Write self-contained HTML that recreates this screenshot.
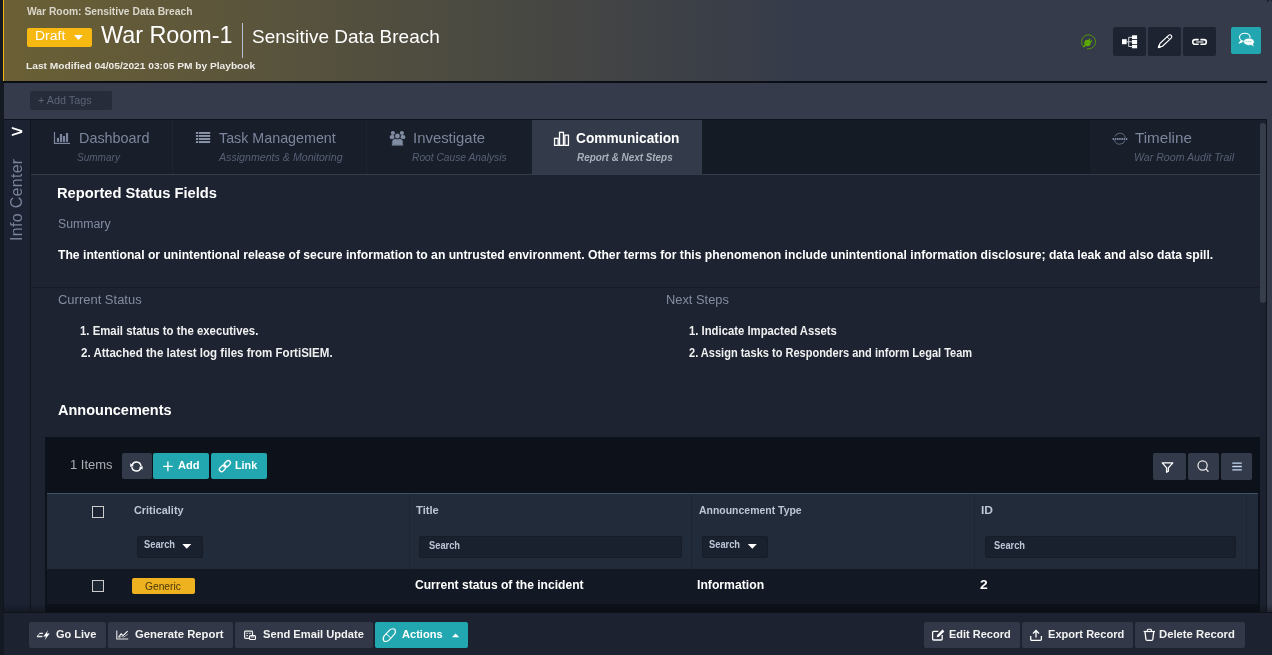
<!DOCTYPE html>
<html lang="en"><head><meta charset="utf-8"><title>War Room-1 | Sensitive Data Breach</title>
<style>
html,body{margin:0;padding:0;}
body{width:1272px;height:655px;overflow:hidden;background:#353b4a;font-family:"Liberation Sans", sans-serif;position:relative;}
#root{position:absolute;left:0;top:0;width:1272px;height:655px;overflow:hidden;will-change:transform;}
#root div{position:absolute;box-sizing:border-box;}
#root svg{position:absolute;overflow:visible;}
.t{position:absolute;white-space:nowrap;transform-origin:0 50%;display:inline-block;}
</style></head><body><div id="root">

<div style="left:0px;top:0px;width:1272px;height:81px;background:linear-gradient(to right,#6b6035 0px,#353b4a 800px);"></div>
<div style="left:0px;top:0px;width:4px;height:655px;background:#141922;"></div>
<div style="left:3px;top:0px;width:1px;height:81px;background:#f5b70f;"></div>
<div style="left:3px;top:81px;width:1264px;height:2px;background:#0b0f15;"></div>
<div style="left:27px;top:28px;width:65px;height:19px;background:#f7b911;border-radius:2px;"></div>
<div style="left:242px;top:23px;width:1px;height:35px;background:#b4bfd2;"></div>
<div style="left:1113px;top:27px;width:33px;height:29px;background:#1d2331;border-radius:2px;"></div>
<div style="left:1148px;top:27px;width:33px;height:29px;background:#1d2331;border-radius:2px;"></div>
<div style="left:1183px;top:27px;width:33px;height:29px;background:#1d2331;border-radius:2px;"></div>
<div style="left:1231px;top:27px;width:30px;height:27px;background:#22a7b1;border-radius:2px;"></div>
<div style="left:30px;top:91px;width:82px;height:19px;background:#262c3a;border-radius:2px;"></div>
<div style="left:3px;top:119px;width:1264px;height:493px;background:#10141c;"></div>
<div style="left:4px;top:120px;width:26px;height:492px;background:#1c2231;"></div>
<div style="left:31px;top:120px;width:1235px;height:492px;background:#1d2331;"></div>
<div style="left:31px;top:120px;width:1229px;height:54px;background:#181e2a;"></div>
<div style="left:702px;top:120px;width:388px;height:54px;background:#151b25;"></div>
<div style="left:531.5px;top:120px;width:170.5px;height:54px;background:#333a49;"></div>
<div style="left:172px;top:120px;width:1px;height:54px;background:#1e2532;"></div>
<div style="left:365.5px;top:120px;width:1.0px;height:54px;background:#1e2532;"></div>
<div style="left:31px;top:174px;width:1229px;height:1px;background:#343d4c;"></div>
<div style="left:1260px;top:120px;width:6px;height:492px;background:#1b212e;"></div>
<div style="left:1260px;top:123px;width:6px;height:180px;background:#363d4b;border-radius:3px;"></div>
<div style="left:31px;top:287px;width:1229px;height:1px;background:#171c27;"></div>
<div style="left:45px;top:437px;width:1214.5px;height:175px;background:#0d1119;"></div>
<div style="left:122px;top:453px;width:30px;height:26px;background:#333a49;border-radius:2px;"></div>
<div style="left:153px;top:453px;width:56px;height:26px;background:#22a7b1;border-radius:2px;"></div>
<div style="left:211px;top:453px;width:56px;height:26px;background:#22a7b1;border-radius:2px;"></div>
<div style="left:1153px;top:453px;width:33px;height:27px;background:#333a49;border-radius:2px;"></div>
<div style="left:1188px;top:453px;width:31px;height:27px;background:#333a49;border-radius:2px;"></div>
<div style="left:1221px;top:453px;width:31px;height:27px;background:#333a49;border-radius:2px;"></div>
<div style="left:47px;top:493px;width:1211px;height:76px;background:#212b39;border-top:1px solid #3e5169;"></div>
<div style="left:408.5px;top:494px;width:1.0px;height:75px;background:#1c2533;"></div>
<div style="left:691px;top:494px;width:1px;height:75px;background:#1c2533;"></div>
<div style="left:974px;top:494px;width:1px;height:75px;background:#1c2533;"></div>
<div style="left:1246px;top:494px;width:1px;height:75px;background:#1c2533;"></div>
<div style="left:47px;top:569px;width:1211px;height:35px;background:#131924;"></div>
<div style="left:92px;top:505.5px;width:12px;height:12.5px;background:#1d2532;border:1px solid #cdcdcd;"></div>
<div style="left:92px;top:580px;width:12px;height:12px;background:#1d2532;border:1px solid #cdcdcd;"></div>
<div style="left:137px;top:536px;width:66px;height:22px;background:#1a212e;border:1px solid #171c27;border-radius:2px;"></div>
<div style="left:419px;top:536px;width:263px;height:22px;background:#1a212e;border:1px solid #171c27;border-radius:2px;"></div>
<div style="left:702px;top:536px;width:66px;height:22px;background:#1a212e;border:1px solid #171c27;border-radius:2px;"></div>
<div style="left:985px;top:536px;width:251px;height:22px;background:#1a212e;border:1px solid #171c27;border-radius:2px;"></div>
<div style="left:132px;top:578px;width:63px;height:16px;background:#eeb11f;border-radius:2px;"></div>
<div style="left:3px;top:604px;width:1269px;height:8px;background:linear-gradient(to bottom,rgba(8,11,16,0),rgba(8,11,16,0.42));"></div>
<div style="left:3px;top:612px;width:1269px;height:1px;background:#0e1219;"></div>
<div style="left:3.7px;top:613px;width:1268.3px;height:42px;background:#1c2230;"></div>
<div style="left:29px;top:622px;width:77px;height:26px;background:#323847;border-radius:2px;"></div>
<div style="left:108px;top:622px;width:125px;height:26px;background:#323847;border-radius:2px;"></div>
<div style="left:235px;top:622px;width:138px;height:26px;background:#323847;border-radius:2px;"></div>
<div style="left:375px;top:622px;width:93px;height:26px;background:#22a7b1;border-radius:2px;"></div>
<div style="left:924px;top:622px;width:96px;height:26px;background:#323847;border-radius:2px;"></div>
<div style="left:1022px;top:622px;width:111px;height:26px;background:#323847;border-radius:2px;"></div>
<div style="left:1135px;top:622px;width:110px;height:26px;background:#323847;border-radius:2px;"></div>
<div style="left:1267px;top:0;width:2px;height:2px;background:#1a1f2a;border-radius:0 0 1px 1px"></div><div style="left:1271px;top:0;width:1px;height:1px;background:#1a1f2a"></div>
<span class="t" style="left:6.5px;top:240.5px;font-size:16px;line-height:20px;color:#78829a;letter-spacing:0.3px;transform-origin:0 0;transform:rotate(-90deg);">Info Center</span>
<svg style="left:0;top:0" width="1272" height="655" viewBox="0 0 1272 655" fill="none">
<!-- carets -->
<path d="M74 35h9l-4.5 5z" fill="#fff"/>
<path d="M182.3 543.9h9l-4.5 4.9z" fill="#fff"/>
<path d="M747.8 543.9h9l-4.5 4.9z" fill="#fff"/>
<path d="M452 637.2h7.2l-3.6-3.6z" fill="#fff"/>
<!-- green plug -->
<g stroke="#5aa800" fill="none" stroke-linecap="round">
<circle cx="1088.5" cy="41.9" r="7.05" stroke-width="0.85" stroke-dasharray="39.2 5.1" transform="rotate(138 1088.5 41.9)" opacity="0.9"/>
<path d="M1088.7 40.5l1.1-1.3M1090.3 42.1l1.3-1.1" stroke-width="1.3"/>
<path d="M1085.2 45.3l-1.3 1.3" stroke-width="1.5"/>
</g>
<circle cx="1087.5" cy="43" r="3.2" fill="#5aa800"/>
<!-- hierarchy -->
<g fill="#fff"><rect x="1122" y="39.2" width="4.7" height="5"/><rect x="1132" y="35.3" width="5.1" height="3.8"/><rect x="1132" y="40" width="5.1" height="4"/><rect x="1132" y="44.8" width="5.1" height="3.5"/></g>
<path d="M1126.7 41.8h2M1132 37.3h-3.3v9.2h3.3M1128.7 41.8h3.3" stroke="#d4d6da" stroke-width="1"/>
<!-- pencil -->
<g transform="translate(1158.3 47.6) rotate(-43.2)" stroke="#fff" stroke-width="1.15" stroke-linejoin="round">
<path d="M0.3 0L4-1.85H15.9a1.85 1.85 0 0 1 0 3.7H4z"/><path d="M13.8-1.85v3.7" stroke-width="0.9"/><path d="M0 0l2-0.95v1.9z" fill="#fff"/></g>
<!-- link -->
<g stroke="#fff" stroke-width="1.55" stroke-linecap="butt"><path d="M1198.7 39.6h-3.6a2.35 2.35 0 0 0 0 4.7h3.6"/><path d="M1200.4 39.6h3.6a2.35 2.35 0 0 1 0 4.7h-3.6"/></g>
<path d="M1196.2 41.95h7.2" stroke="#b9bbc0" stroke-width="1.5"/>
<!-- chat -->
<g stroke="#fff" stroke-width="1.1"><ellipse cx="1244.8" cy="37.3" rx="5.3" ry="4.1"/><path d="M1241.2 40.6l-2 2.5 3.6-1.5" stroke-linejoin="round" fill="#fff"/></g>
<ellipse cx="1248.9" cy="41.8" rx="5.4" ry="3.6" fill="#fff" stroke="#22a7b1" stroke-width="0.6"/><path d="M1250.8 44.4l2.8 2-0.8-3.2z" fill="#fff"/>
<path d="M1245.6 41.5h6.6" stroke="#9ad8dc" stroke-width="1" stroke-dasharray="1.6 0.6"/>
<!-- tab: bar chart -->
<g fill="#7c879f"><rect x="53.9" y="132" width="1.2" height="12"/><rect x="53.9" y="142.8" width="16.2" height="1.2"/><rect x="56.9" y="137.9" width="2.1" height="4"/><rect x="59.9" y="134" width="2.2" height="7.9"/><rect x="62.9" y="136" width="2.1" height="5.9"/><rect x="65.9" y="133" width="2.2" height="8.9"/></g>
<!-- tab: list -->
<g fill="#8d97ab"><rect x="195.9" y="132" width="2.3" height="1.9"/><rect x="198.9" y="132" width="11.3" height="1.9"/><rect x="195.9" y="135" width="2.3" height="1.9"/><rect x="198.9" y="135" width="11.3" height="1.9"/><rect x="195.9" y="138.05" width="2.3" height="1.9"/><rect x="198.9" y="138.05" width="11.3" height="1.9"/><rect x="195.9" y="141.1" width="2.3" height="1.9"/><rect x="198.9" y="141.1" width="11.3" height="1.9"/></g>
<!-- tab: users -->
<g fill="#808ca2"><circle cx="392.9" cy="133" r="2.1"/><circle cx="401.9" cy="133" r="2.1"/><rect x="389.7" y="135" width="4.9" height="4.1" rx="1.9"/><rect x="400.4" y="135" width="4.9" height="4.1" rx="1.9"/>
<g stroke="#181e2a" stroke-width="0.9"><path d="M391.8 145.2v-3.6a3 3 0 0 1 3-3h5.4a3 3 0 0 1 3 3v3.6a0 0 0 0 1 0 0z" /><circle cx="397.45" cy="136" r="2.9"/></g></g>
<rect x="391.8" y="144.3" width="11.4" height="1.3" rx="0.6" fill="#808ca2"/>
<!-- tab: communication bars -->
<g stroke="#fff" stroke-width="1.3"><rect x="554.55" y="138.35" width="3.6" height="7"/><rect x="559.55" y="132.35" width="3.9" height="13"/><rect x="564.85" y="135.15" width="3.6" height="10.2"/></g>
<!-- tab: timeline -->
<circle cx="1119.8" cy="138.7" r="5.5" stroke="#687287" stroke-width="0.9" stroke-dasharray="13.6 3.7" stroke-dashoffset="-1.85"/>
<path d="M1112.6 139h14.8" stroke="#7c879f" stroke-width="1.9" stroke-dasharray="1.5 0.7"/>
<!-- grid: refresh -->
<g stroke="#fff" stroke-width="1.5"><path d="M132 465.2a4.6 4.6 0 0 1 8.95 0.6"/><path d="M140.8 467.8a4.6 4.6 0 0 1-8.95-0.6"/></g>
<path d="M130.2 463.2l3.6 2.8-3.5 0.9z M142.6 469.8l-3.6-2.8 3.5-0.9z" fill="#fff"/>
<!-- grid: plus -->
<path d="M163.1 466.4h9.6M167.9 461.6v9.6" stroke="#fff" stroke-width="1.4"/>
<!-- grid: chain -->
<g stroke="#fff" stroke-width="1.3"><rect x="-3.5" y="-2.2" width="7" height="4.4" rx="2.2" transform="translate(222.5 468.5) rotate(-45)"/><rect x="-3.5" y="-2.2" width="7" height="4.4" rx="2.2" transform="translate(227.3 463.7) rotate(-45)"/></g>
<path d="M223.7 467.3l2.4-2.4" stroke="#fff" stroke-width="1.6"/>
<!-- grid: filter -->
<path d="M1162.3 462.8h10.5l-4.4 5.1v3.4l-1.8 1v-4.4z" stroke="#fff" stroke-width="1.3" stroke-linejoin="round"/>
<!-- grid: search -->
<circle cx="1202.6" cy="465.5" r="4.6" stroke="#ececec" stroke-width="1.2"/><path d="M1205.9 468.9l2.5 2.8" stroke="#ececec" stroke-width="1.3"/>
<!-- grid: menu -->
<path d="M1232.3 463.1h9.5M1232.3 466.5h9.5M1232.3 469.9h9.5" stroke="#c5daf5" stroke-width="1.4"/>
<!-- footer: bolt -->
<path d="M48.3 630l-5 6.4h2.8l-1.6 3.9 5.2-6.7h-2.9z" fill="#fff"/>
<path d="M39.4 633.4h3.6M37 636.5h5.4" stroke="#ececec" stroke-width="1.3"/>
<path d="M39.6 633.4l-2.4 3.1" stroke="#dcdcdc" stroke-width="0.9"/>
<!-- footer: chart -->
<path d="M116.8 630.6v8.4h11.4" stroke="#e8e8e8" stroke-width="1.1"/>
<path d="M118.5 637.3l2.6-3.4 2 1.7 4.5-4.5" stroke="#fff" stroke-width="1.1"/>
<path d="M118.9 638.4l2.4-2.2 2.2 1 4.3-3" stroke="#b9bcc4" stroke-width="0.9"/>
<!-- footer: send email -->
<rect x="244.6" y="631.1" width="7.9" height="7.3" rx="0.8" stroke="#eee" stroke-width="1.2"/>
<path d="M246.3 633.3h1.5M248.8 633.3h2M246.3 635.6h1.5" stroke="#eee" stroke-width="1.1"/>
<rect x="249.5" y="635.5" width="6" height="4" rx="1" fill="#323847" stroke="#fff" stroke-width="1.1"/>
<path d="M250.5 636.9h4" stroke="#fff" stroke-width="0.9"/>
<!-- footer: actions -->
<g transform="translate(389.3 635.1) rotate(-47)" stroke="#fff" stroke-width="1.15"><path d="M-8 0q1-3.2 4.5-3.2h7q3.5 0 4.5 3.2q-1 3.2-4.5 3.2h-7q-3.5 0-4.5-3.2z"/><path d="M-1.5-3.2q1.2 3.2 0 6.4" stroke-width="0.9"/></g>
<!-- footer: edit -->
<path d="M938.3 631.3h-4.6a1.1 1.1 0 0 0-1.1 1.1v6.5a1.1 1.1 0 0 0 1.1 1.1h7.4a1.1 1.1 0 0 0 1.1-1.1v-3.8" stroke="#fff" stroke-width="1.3"/>
<path d="M936.6 637.3l0.6-2.4 5.3-5.3 1.8 1.8-5.3 5.3z" fill="#fff"/>
<!-- footer: export -->
<path d="M1030.7 636v3.2a1.1 1.1 0 0 0 1.1 1.1h8.5a1.1 1.1 0 0 0 1.1-1.1v-3.2" stroke="#fff" stroke-width="1.3"/>
<path d="M1036 637.6v-6.6M1033 633.5l3-3 3 3" stroke="#fff" stroke-width="1.3"/>
<!-- footer: trash -->
<path d="M1143.6 631.5h11.4" stroke="#fff" stroke-width="1.2"/>
<path d="M1147.3 631.2v-1.1a.8 .8 0 0 1 .8-.8h2.5a.8 .8 0 0 1 .8 .8v1.1" stroke="#fff" stroke-width="1.1"/>
<path d="M1145 631.8l.9 7.4a1.3 1.3 0 0 0 1.3 1.1h4.3a1.3 1.3 0 0 0 1.3-1.1l.9-7.4" stroke="#fff" stroke-width="1.3"/>
</svg>

<span class="t f" style="left:26.90px;top:3.87px;font-size:10.5px;line-height:15px;color:#d9d6cb;font-weight:700;transform:scaleX(0.9805);">War Room: Sensitive Data Breach</span>
<span class="t f" style="left:35.07px;top:26.65px;font-size:12.5px;line-height:18px;color:#fff;transform:scaleX(1.1185);">Draft</span>
<span class="t f" style="left:100.79px;top:17.76px;font-size:24.0px;line-height:34px;color:#fff;transform:scaleX(0.9735);">War Room-1</span>
<span class="t f" style="left:251.85px;top:24.39px;font-size:18.5px;line-height:26px;color:#fff;transform:scaleX(1.0256);">Sensitive Data Breach</span>
<span class="t f" style="left:26.38px;top:58.93px;font-size:9.5px;line-height:13px;color:#ecebe6;font-weight:700;transform:scaleX(1.0720);">Last Modified 04/05/2021 03:05 PM by Playbook</span>
<span class="t f" style="left:38.04px;top:92.54px;font-size:11.0px;line-height:15px;color:#5c6475;transform:scaleX(0.9837);">+ Add Tags</span>
<span class="t f" style="left:10.50px;top:119.78px;font-size:17px;line-height:24px;color:#fff;font-weight:700;transform:scaleX(1.2097);">&gt;</span>
<span class="t f" style="left:78.83px;top:126.60px;font-size:15.0px;line-height:21px;color:#7c869c;transform:scaleX(0.9592);">Dashboard</span>
<span class="t f" style="left:76.68px;top:150.70px;font-size:10.0px;line-height:14px;color:#576075;font-style:italic;transform:scaleX(1.0026);">Summary</span>
<span class="t f" style="left:218.62px;top:126.60px;font-size:15.0px;line-height:21px;color:#7c869c;transform:scaleX(0.9528);">Task Management</span>
<span class="t f" style="left:219.21px;top:150.70px;font-size:10.0px;line-height:14px;color:#576075;font-style:italic;transform:scaleX(1.0637);">Assignments &amp; Monitoring</span>
<span class="t f" style="left:413.14px;top:126.60px;font-size:15.0px;line-height:21px;color:#7c869c;transform:scaleX(0.9935);">Investigate</span>
<span class="t f" style="left:412.15px;top:150.70px;font-size:10.0px;line-height:14px;color:#576075;font-style:italic;transform:scaleX(1.0229);">Root Cause Analysis</span>
<span class="t f" style="left:576.45px;top:127.40px;font-size:15.0px;line-height:21px;color:#fff;font-weight:700;transform:scaleX(0.9124);">Communication</span>
<span class="t f" style="left:576.89px;top:150.70px;font-size:10.0px;line-height:14px;color:#aab0bb;font-weight:700;font-style:italic;transform:scaleX(0.9894);">Report &amp; Next Steps</span>
<span class="t f" style="left:1135.19px;top:126.70px;font-size:15.0px;line-height:21px;color:#7c869c;transform:scaleX(1.0137);">Timeline</span>
<span class="t f" style="left:1134.37px;top:150.70px;font-size:10.0px;line-height:14px;color:#576075;font-style:italic;transform:scaleX(1.0607);">War Room Audit Trail</span>
<span class="t f" style="left:57.49px;top:182.93px;font-size:14.5px;line-height:20px;color:#fff;font-weight:700;transform:scaleX(1.0123);">Reported Status Fields</span>
<span class="t f" style="left:58.07px;top:214.85px;font-size:12.5px;line-height:18px;color:#838da0;transform:scaleX(0.9831);">Summary</span>
<span class="t f" style="left:58.39px;top:245.52px;font-size:13.0px;line-height:18px;color:#fff;font-weight:700;transform:scaleX(0.9358);">The intentional or unintentional release of secure information to an untrusted environment. Other terms for this phenomenon include unintentional information disclosure; data leak and also data spill.</span>
<span class="t f" style="left:57.86px;top:290.85px;font-size:12.5px;line-height:18px;color:#838da0;transform:scaleX(1.0380);">Current Status</span>
<span class="t f" style="left:665.74px;top:290.85px;font-size:12.5px;line-height:18px;color:#838da0;transform:scaleX(1.0290);">Next Steps</span>
<span class="t f" style="left:80.35px;top:321.85px;font-size:12.5px;line-height:18px;color:#f0f0f0;font-weight:700;transform:scaleX(0.9101);">1. Email status to the executives.</span>
<span class="t f" style="left:80.65px;top:343.75px;font-size:12.5px;line-height:18px;color:#f0f0f0;font-weight:700;transform:scaleX(0.9233);">2. Attached the latest log files from FortiSIEM.</span>
<span class="t f" style="left:688.76px;top:321.85px;font-size:12.5px;line-height:18px;color:#f0f0f0;font-weight:700;transform:scaleX(0.9046);">1. Indicate Impacted Assets</span>
<span class="t f" style="left:689.06px;top:343.75px;font-size:12.5px;line-height:18px;color:#f0f0f0;font-weight:700;transform:scaleX(0.8823);">2. Assign tasks to Responders and inform Legal Team</span>
<span class="t f" style="left:58.02px;top:399.93px;font-size:14.5px;line-height:20px;color:#fff;font-weight:700;">Announcements</span>
<span class="t f" style="left:69.76px;top:455.52px;font-size:13.0px;line-height:18px;color:#abadb2;transform:scaleX(0.9987);">1 Items</span>
<span class="t f" style="left:177.84px;top:457.11px;font-size:11.5px;line-height:16px;color:#fff;font-weight:700;transform:scaleX(0.9666);">Add</span>
<span class="t f" style="left:235.14px;top:457.11px;font-size:11.5px;line-height:16px;color:#fff;font-weight:700;transform:scaleX(0.9366);">Link</span>
<span class="t f" style="left:133.56px;top:502.41px;font-size:11.5px;line-height:16px;color:#bcc6d6;font-weight:700;transform:scaleX(0.9457);">Criticality</span>
<span class="t f" style="left:416.39px;top:502.41px;font-size:11.5px;line-height:16px;color:#bcc6d6;font-weight:700;transform:scaleX(0.9736);">Title</span>
<span class="t f" style="left:698.64px;top:502.41px;font-size:11.5px;line-height:16px;color:#bcc6d6;font-weight:700;transform:scaleX(0.9095);">Announcement Type</span>
<span class="t f" style="left:981.26px;top:502.41px;font-size:11.5px;line-height:16px;color:#bcc6d6;font-weight:700;transform:scaleX(1.0446);">ID</span>
<span class="t f" style="left:143.72px;top:538.40px;font-size:10px;line-height:14px;color:#bcc6d6;font-weight:700;transform:scaleX(0.9305);">Search</span>
<span class="t f" style="left:428.63px;top:539.40px;font-size:10px;line-height:14px;color:#bcc6d6;font-weight:700;transform:scaleX(0.9305);">Search</span>
<span class="t f" style="left:708.63px;top:538.40px;font-size:10px;line-height:14px;color:#bcc6d6;font-weight:700;transform:scaleX(0.9305);">Search</span>
<span class="t f" style="left:993.63px;top:539.40px;font-size:10px;line-height:14px;color:#bcc6d6;font-weight:700;transform:scaleX(0.9305);">Search</span>
<span class="t f" style="left:145.00px;top:579.27px;font-size:10.5px;line-height:15px;color:#46370d;transform:scaleX(0.9737);">Generic</span>
<span class="t f" style="left:414.53px;top:575.62px;font-size:13.0px;line-height:18px;color:#fff;font-weight:700;transform:scaleX(0.9297);">Current status of the incident</span>
<span class="t f" style="left:696.73px;top:575.62px;font-size:13.0px;line-height:18px;color:#fff;font-weight:700;transform:scaleX(0.9386);">Information</span>
<span class="t f" style="left:979.99px;top:575.62px;font-size:13.0px;line-height:18px;color:#fff;font-weight:700;transform:scaleX(1.0663);">2</span>
<span class="t f" style="left:56.45px;top:626.11px;font-size:11.5px;line-height:16px;color:#f2f2f2;font-weight:700;transform:scaleX(0.9551);">Go Live</span>
<span class="t f" style="left:134.73px;top:626.11px;font-size:11.5px;line-height:16px;color:#f2f2f2;font-weight:700;transform:scaleX(0.9828);">Generate Report</span>
<span class="t f" style="left:262.65px;top:626.11px;font-size:11.5px;line-height:16px;color:#f2f2f2;font-weight:700;transform:scaleX(0.9693);">Send Email Update</span>
<span class="t f" style="left:401.71px;top:626.11px;font-size:11.5px;line-height:16px;color:#fff;font-weight:700;transform:scaleX(0.9632);">Actions</span>
<span class="t f" style="left:948.94px;top:626.11px;font-size:11.5px;line-height:16px;color:#f2f2f2;font-weight:700;transform:scaleX(0.9548);">Edit Record</span>
<span class="t f" style="left:1048.03px;top:626.11px;font-size:11.5px;line-height:16px;color:#f2f2f2;font-weight:700;transform:scaleX(0.9624);">Export Record</span>
<span class="t f" style="left:1159.32px;top:626.11px;font-size:11.5px;line-height:16px;color:#f2f2f2;font-weight:700;transform:scaleX(0.9812);">Delete Record</span>
</div></body></html>
